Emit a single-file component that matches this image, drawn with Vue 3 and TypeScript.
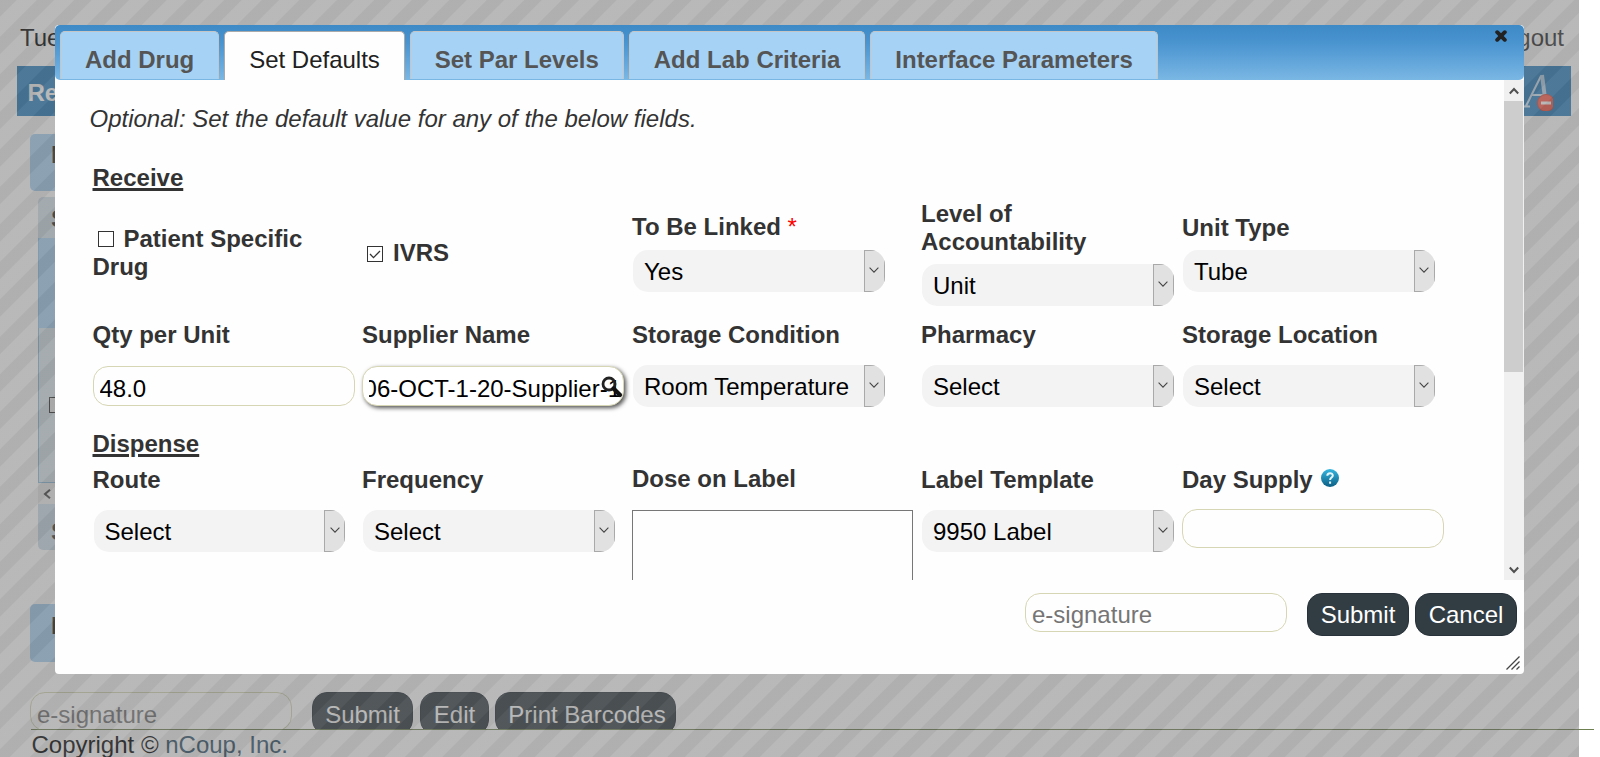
<script setup lang="ts">
interface Tab {
  label: string
  active?: boolean
}

interface Field {
  label: string
  kind: 'select' | 'input' | 'lookup' | 'check' | 'area'
  value?: string
  checked?: boolean
  required?: boolean
  help?: boolean
}

const tabs: Tab[] = [
  { label: 'Add Drug' },
  { label: 'Set Defaults', active: true },
  { label: 'Set Par Levels' },
  { label: 'Add Lab Criteria' },
  { label: 'Interface Parameters' },
]

const receiveTop: Field[] = [
  { label: 'Patient Specific Drug', kind: 'check', checked: false },
  { label: 'IVRS', kind: 'check', checked: true },
  { label: 'To Be Linked', kind: 'select', value: 'Yes', required: true },
  { label: 'Level of Accountability', kind: 'select', value: 'Unit' },
  { label: 'Unit Type', kind: 'select', value: 'Tube' },
]

const receiveBottom: Field[] = [
  { label: 'Qty per Unit', kind: 'input', value: '48.0' },
  { label: 'Supplier Name', kind: 'lookup', value: '06-OCT-1-20-Supplier-1' },
  { label: 'Storage Condition', kind: 'select', value: 'Room Temperature' },
  { label: 'Pharmacy', kind: 'select', value: 'Select' },
  { label: 'Storage Location', kind: 'select', value: 'Select' },
]

const dispense: Field[] = [
  { label: 'Route', kind: 'select', value: 'Select' },
  { label: 'Frequency', kind: 'select', value: 'Select' },
  { label: 'Dose on Label', kind: 'area' },
  { label: 'Label Template', kind: 'select', value: '9950 Label' },
  { label: 'Day Supply', kind: 'input', value: '', help: true },
]

const rows = [
  { name: 'receive-top', title: 'Receive', fields: receiveTop },
  { name: 'receive-bottom', title: '', fields: receiveBottom },
  { name: 'dispense', title: 'Dispense', fields: dispense },
]
</script>

<template>
  <div class="screen">
    <div class="page">
      <div class="topline"><span>Tue</span><span class="logout">Logout</span></div>
      <div class="titlebar">
        <b>Re</b>
        <svg class="font-icon" width="34" height="40" viewBox="0 0 34 40">
          <path d="M7 35L22 5M13 24h11M3 35.500h8" fill="none" stroke="#cfe6f8" stroke-width="2" />
          <path d="M23 4l4 31" fill="none" stroke="#b5d3ea" stroke-width="4" />
          <circle cx="27" cy="32" r="8.5" fill="#ff5a48" stroke="#d8402f" />
          <path d="M22 32h10" stroke="#fff" stroke-width="3" />
        </svg>
      </div>
      <div class="panel first"><b>I</b></div>
      <div class="grid-box">
        <div class="grid-head"><b>S</b></div>
        <div class="grid-cols"></div>
        <div class="grid-row"><i class="checkbox"></i></div>
        <div class="grid-scroll">
          <svg width="8" height="10" viewBox="0 0 8 10"><path d="M7 .8L2 5l5 4.200" fill="none" stroke="#444" stroke-width="2" /></svg>
        </div>
        <div class="grid-foot"><b>S</b></div>
      </div>
      <div class="panel second"><b>I</b></div>
      <div class="actions">
        <input class="text-input sign" placeholder="e-signature" />
        <button class="btn submit">Submit</button>
        <button class="btn edit">Edit</button>
        <button class="btn print">Print Barcodes</button>
      </div>
    </div>
    <div class="copyright">Copyright © <a>nCoup, Inc.</a></div>
    <div class="overlay"></div>

    <div class="dialog">
      <div class="tabs">
        <div v-for="t in tabs" :key="t.label" class="tab" :class="{ active: t.active }">{{ t.label }}</div>
        <svg class="close" width="12" height="12" viewBox="0 0 12 12">
          <path d="M2.200 2.200L9.800 9.800M9.800 2.200L2.200 9.800" stroke="#222" stroke-width="3.900" stroke-linecap="round" />
        </svg>
      </div>

      <div class="viewport">
        <div class="content">
          <p class="intro">Optional: Set the default value for any of the below fields.</p>
          <section v-for="r in rows" :key="r.name" :class="r.name">
            <h3 v-if="r.title">{{ r.title }}</h3>
            <div class="row">
              <div v-for="f in r.fields" :key="f.label" class="field" :class="[`field-${f.kind}`, { required: f.required }]">
                <label>
                  <i v-if="f.kind === 'check'" class="checkbox"><svg v-if="f.checked" width="14" height="14" viewBox="0 0 14 14"><path d="M2 7l3.500 3.600L12 4" fill="none" stroke="#333" stroke-width="1.300" /></svg></i>{{ f.label }}<span v-if="f.required" class="req"> *</span><svg v-if="f.help" class="help" width="18" height="18" viewBox="0 0 18 18">
                    <defs>
                      <linearGradient id="helpFill" x1="0" y1="0" x2="0" y2="1">
                        <stop offset="0" stop-color="#35b6e0" />
                        <stop offset="1" stop-color="#0c5f85" />
                      </linearGradient>
                    </defs>
                    <circle cx="9" cy="9" r="9" fill="url(#helpFill)" />
                    <path d="M6.300 6.800C6.300 3.300 11.900 3.400 11.800 6.600C11.700 8.600 9.100 8.500 9.100 11M9.100 12.600v2.100" fill="none" stroke="#e8f7fc" stroke-width="2" />
                  </svg>
                </label>
                <div v-if="f.kind === 'select'" class="select">
                  <span class="select-text">{{ f.value }}</span>
                  <span class="select-arrow"><svg width="10" height="6" viewBox="0 0 10 6"><path d="M.6.7L5 5.100 9.400.7" fill="none" stroke="#444" stroke-width="1.100" /></svg></span>
                </div>
                <input v-else-if="f.kind === 'input'" class="text-input" :value="f.value" />
                <div v-else-if="f.kind === 'lookup'" class="text-input lookup-box">
                  <div class="lookup-text"><span>{{ f.value }}</span></div>
                  <svg class="lens" width="22" height="22" viewBox="0 0 22 22">
                    <circle cx="8" cy="8" r="6" fill="none" stroke="#222" stroke-width="2.800" />
                    <path d="M12.500 12.500L19 19" stroke="#111" stroke-width="4.200" stroke-linecap="round" />
                  </svg>
                </div>
                <div v-else-if="f.kind === 'area'" class="textarea"></div>
              </div>
            </div>
          </section>
        </div>
        <div class="scrollbar">
          <div class="sb-btn"><svg width="10" height="8" viewBox="0 0 10 8"><path d="M.8 6.500L5 2l4.200 4.500" fill="none" stroke="#505050" stroke-width="2" /></svg></div>
          <div class="sb-thumb"></div>
          <div class="sb-space"></div>
          <div class="sb-btn"><svg width="10" height="8" viewBox="0 0 10 8"><path d="M.8 1.500L5 6l4.200-4.500" fill="none" stroke="#505050" stroke-width="2" /></svg></div>
        </div>
      </div>

      <div class="footer">
        <input class="text-input sign" placeholder="e-signature" />
        <button class="btn">Submit</button>
        <button class="btn">Cancel</button>
      </div>
      <svg class="grip" width="14" height="14" viewBox="0 0 14 14">
        <path d="M.5 13.500L13.500.5M5.500 13.500l8-8M10.500 13.500l3-3" stroke="#444" stroke-width="1.300" />
      </svg>
    </div>
  </div>
</template>

<style>
body {
  margin: 0;
  background: #fff;
  overflow: hidden;
}
</style>

<style scoped>
* {
  box-sizing: border-box;
}
.screen {
  position: relative;
  width: 1600px;
  height: 757px;
  overflow: hidden;
  font: 24px/28px "Liberation Sans", Arial, sans-serif;
  color: #000;
}
.page {
  width: 1579px;
  height: 729px;
  overflow: hidden;
  padding-top: 24px;
}
.topline {
  display: flex;
  justify-content: space-between;
  height: 42px;
  padding: 0 15px 0 20px;
}
.logout {
  color: #2c2c2c;
}
.titlebar {
  display: flex;
  justify-content: space-between;
  align-items: center;
  height: 50px;
  margin: 0 8px 18px 17px;
  padding: 0 18px 0 10.500px;
  background: #287ebe;
  color: #fff;
}
.titlebar b {
  margin-top: 3px;
}
.panel {
  width: 300px;
  margin-left: 30px;
  padding-left: 21px;
  background: #a6d2f4;
  border-radius: 5px;
  color: #222;
}
.panel.first {
  height: 57px;
  padding-top: 7px;
}
.panel.second {
  height: 58px;
  padding-top: 8px;
}
.grid-box {
  width: 400px;
  margin: 6px 0 54px 38px;
  color: #333;
}
.grid-head {
  height: 41px;
  padding: 8px 0 0 13px;
  background: #d5e3ec;
  border-radius: 5px 0 0 0;
}
.grid-cols {
  height: 90px;
  background: #a6d2f4;
  border-left: 1px solid #8fc4e8;
}
.grid-row {
  height: 155px;
  padding: 69px 0 0 10px;
  background: #d9e6ec;
  border: solid #8abbd8;
  border-width: 0 0 1px 1px;
}
.grid-row .checkbox {
  background: #efefef;
}
.grid-scroll {
  display: flex;
  align-items: center;
  height: 21px;
  padding-left: 5px;
  background: #eee;
}
.grid-foot {
  height: 46px;
  padding: 14px 0 0 13px;
  background: #ccdcea;
  border-radius: 0 0 0 5px;
}
.actions {
  display: flex;
  align-items: flex-start;
  margin: 30px 0 0 30px;
}
.actions .sign {
  margin-right: 20px;
  padding-top: 6px;
}
.actions .btn {
  padding-top: 2px;
}
.actions .submit {
  width: 101px;
}
.actions .edit {
  width: 69px;
  margin: 0 6px 0 7px;
}
.actions .print {
  width: 181px;
  padding-left: 3px;
}
.copyright {
  width: 1563px;
  height: 28px;
  margin-left: 31px;
  padding: 1px 0 0 .5px;
  border-top: 1px solid #6f8050;
}
.copyright a {
  color: #2d5068;
}
.overlay {
  position: absolute;
  inset: 0 21px 0 0;
  background: repeating-linear-gradient(135deg, rgba(97, 97, 97, 0.5) 0 11.300px, rgba(115, 115, 115, 0.5) 12.300px 25.500px, rgba(97, 97, 97, 0.5) 26.517px);
}
.dialog {
  position: absolute;
  left: 55px;
  top: 25px;
  width: 1469px;
  height: 649px;
  background: #fefefe;
  border-radius: 4px;
  overflow: hidden;
}
.tabs {
  display: flex;
  gap: 5px;
  height: 55px;
  padding: 6px 0 0 5px;
  background: linear-gradient(#3d8ac6, #4a94d0 33%, #7ab7e4);
  border-radius: 5px;
}
.tab {
  height: 48px;
  padding: 14px 23.940px 0;
  background: #a6d3f5;
  border: 1px solid #c5c5c5;
  border-bottom: 0;
  border-radius: 5px 5px 0 0;
  color: #555;
  font-weight: bold;
  white-space: nowrap;
}
.tab.active {
  height: 49px;
  background: #fefefe;
  border-color: #aaa;
  color: #212121;
  font-weight: normal;
}
.close {
  margin: -1px 17px 0 auto;
}
.viewport {
  display: flex;
  height: 500px;
  overflow: hidden;
}
.content {
  flex: 1;
  height: 500px;
  overflow: hidden;
  padding: 25px 0 0 37.500px;
  color: #333;
}
.intro {
  margin: 0 0 31px -3px;
  font-style: italic;
}
h3 {
  margin: 0;
  font: inherit;
  font-weight: bold;
  text-decoration: underline;
  text-decoration-thickness: 3px;
  text-underline-offset: 2px;
}
.row {
  display: grid;
  grid-template-columns: 269.500px 270px 289px 261px 270px;
}
.field label {
  display: block;
  font-weight: bold;
}
.receive-top .row {
  height: 106px;
  margin: 8px 0 15px;
  align-items: center;
}
.field-check {
  padding-right: 40px;
}
.receive-top .select {
  margin-top: 8px;
}
.receive-top .required label {
  margin: -1px 0 9px;
}
.receive-bottom .row {
  height: 109px;
}
.receive-bottom .select,
.dispense .select {
  margin-top: 16px;
}
.receive-bottom .text-input {
  margin-top: 17px;
}
.dispense .text-input {
  height: 39px;
  margin-top: 15px;
}
.dispense .row {
  margin-top: 8px;
}
.checkbox {
  display: inline-block;
  width: 16px;
  height: 16px;
  margin: 0 10px 0 5px;
  border: 1px solid #333;
  background: #fff;
  vertical-align: 0;
  line-height: 0;
}
.grid-row .checkbox {
  margin: 0;
  display: block;
}
.req {
  color: #f00;
  font-weight: normal;
}
.help {
  margin-left: 8px;
  vertical-align: 1px;
}
.select {
  display: flex;
  justify-content: space-between;
  width: 251.500px;
  height: 42px;
  margin-left: 1px;
  background: #f3f3f3;
  border-radius: 15px;
  overflow: hidden;
  color: #000;
}
.select-text {
  padding: 8px 0 0 11px;
  white-space: nowrap;
}
.select-arrow {
  display: flex;
  align-items: center;
  justify-content: center;
  width: 21px;
  background: #e1e1e1;
  border: 1px solid #a9a9a9;
}
.select-arrow svg {
  margin-top: -2px;
}
.receive-top .required .select {
  margin-top: 0;
}
.text-input {
  display: block;
  width: 262px;
  height: 40px;
  padding: 6px 6px 0;
  font: inherit;
  color: #000;
  background: transparent;
  border: 1px solid #d6d6b4;
  border-radius: 15px;
  outline: none;
}
.text-input::placeholder {
  color: #757575;
  opacity: 1;
}
.sign {
  height: 39px;
  padding-top: 4px;
}
.lookup-box {
  position: relative;
  background: #fff;
  box-shadow: 2px 2px 4px #555;
  padding: 8px 0 0 6px;
}
.lookup-text {
  display: flex;
  justify-content: flex-end;
  width: 252px;
  overflow: hidden;
  white-space: nowrap;
}
.lens {
  position: absolute;
  left: 238px;
  top: 9px;
}
.textarea {
  width: 281px;
  height: 120px;
  margin-top: 17px;
  border: 1px solid #777;
}
.field-area label {
  margin-top: -1px;
}
.scrollbar {
  display: flex;
  flex-direction: column;
  width: 20px;
  background: #f0f0f0;
}
.sb-btn {
  display: flex;
  align-items: center;
  justify-content: center;
  height: 21px;
  padding-right: 1px;
}
.sb-thumb {
  width: 19px;
  height: 271px;
  background: #cdcdcd;
}
.sb-space {
  flex: 1;
}
.footer {
  display: flex;
  align-items: flex-start;
  justify-content: flex-end;
  padding: 13px 7px 0 0;
}
.footer .sign {
  margin-right: 20px;
}
.footer .btn {
  width: 102px;
}
.footer .btn + .btn {
  margin-left: 6px;
}
.btn {
  height: 43px;
  padding: 0;
  font: inherit;
  color: #fff;
  background: #323c43;
  border: 1px solid #28323a;
  border-radius: 15px;
  white-space: nowrap;
}
.grip {
  position: absolute;
  right: 4px;
  bottom: 4px;
}
</style>
